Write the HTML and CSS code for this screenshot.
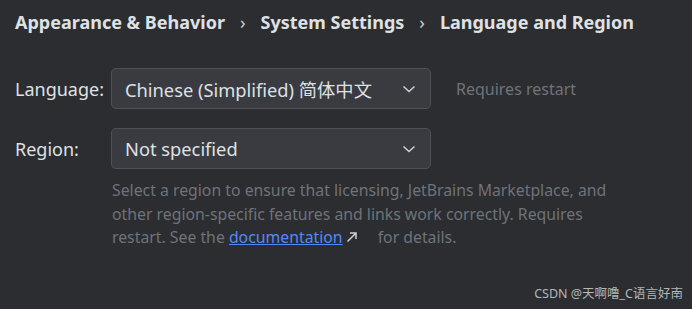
FILE: index.html
```html
<!DOCTYPE html>
<html lang="en">
<head>
    <meta charset="UTF-8">
    <title>Language and Region</title>
    <link rel="stylesheet" href="styles.css">
</head>
<body>

    <div class="breadcrumb">
        <span>Appearance &amp; Behavior</span>
        <span class="sep">&rsaquo;</span>
        <span>System Settings</span>
        <span class="sep">&rsaquo;</span>
        <span>Language and Region</span>
    </div>

    <div class="form">
        <div class="row">
            <label class="label">Language:</label>
            <div class="select">
                <span>Chinese (Simplified) 简体中文</span>
                <svg class="chevron" width="14" height="8" viewBox="0 0 14 8">
                    <polyline points="1.5,1.5 7,6.5 12.5,1.5" fill="none" stroke="#ced0d6" stroke-width="1.5"/>
                </svg>
            </div>
            <span class="hint">Requires restart</span>
        </div>

        <div class="row">
            <label class="label">Region:</label>
            <div class="select">
                <span>Not specified</span>
                <svg class="chevron" width="14" height="8" viewBox="0 0 14 8">
                    <polyline points="1.5,1.5 7,6.5 12.5,1.5" fill="none" stroke="#ced0d6" stroke-width="1.5"/>
                </svg>
            </div>
        </div>

        <p class="help">
            Select a region to ensure that licensing, JetBrains Marketplace, and
            other region-specific features and links work correctly. Requires
            restart. See the <a href="#">documentation</a><svg class="ext" width="12" height="12" viewBox="0 0 12 12">
                <path d="M1.5 10.5 L10 2 M4 2 H10 V8" fill="none" stroke="#ced0d6" stroke-width="1.5"/>
            </svg>for details.
        </p>
    </div>

    <div class="watermark">CSDN @天啊噜_C语言好南</div>

</body>
</html>
```

FILE: styles.css
```css
* {
    margin: 0;
    padding: 0;
    box-sizing: border-box;
}

body {
    font-family: "Noto Sans", "Noto Sans CJK SC", sans-serif;
    background-color: #2b2d30;
    color: #dfe1e5;
    width: 692px;
    height: 309px;
    overflow: hidden;
    position: relative;
}

.breadcrumb {
    display: flex;
    align-items: center;
    padding: 8px 0 0 15px;
    height: 36px;
    font-size: 18px;
    font-weight: bold;
}

.breadcrumb .sep {
    font-weight: normal;
    font-size: 18px;
    padding: 0 15px;
    color: #ced0d6;
}

.form {
    padding: 32px 0 0 15px;
}

.row {
    display: flex;
    align-items: center;
    margin-bottom: 19px;
}

.label {
    width: 96px;
    font-size: 18px;
}

.select {
    width: 320px;
    height: 41px;
    display: flex;
    align-items: center;
    justify-content: space-between;
    padding: 0 14px 0 13px;
    background-color: #393b40;
    border: 1px solid #4e5157;
    border-radius: 5px;
    font-size: 18.3px;
}

.hint {
    margin-left: 25px;
    font-size: 16px;
    color: #6f737a;
}

.help {
    margin: -9px 0 0 97px;
    width: 505px;
    font-size: 15.8px;
    line-height: 23.5px;
    color: #6f737a;
}

.help a {
    color: #548af7;
}

.help .ext {
    margin: 0 20px 0 3px;
}

.watermark {
    position: absolute;
    right: 9px;
    bottom: 7px;
    font-size: 12.5px;
    color: #b4b6ba;
}
```
